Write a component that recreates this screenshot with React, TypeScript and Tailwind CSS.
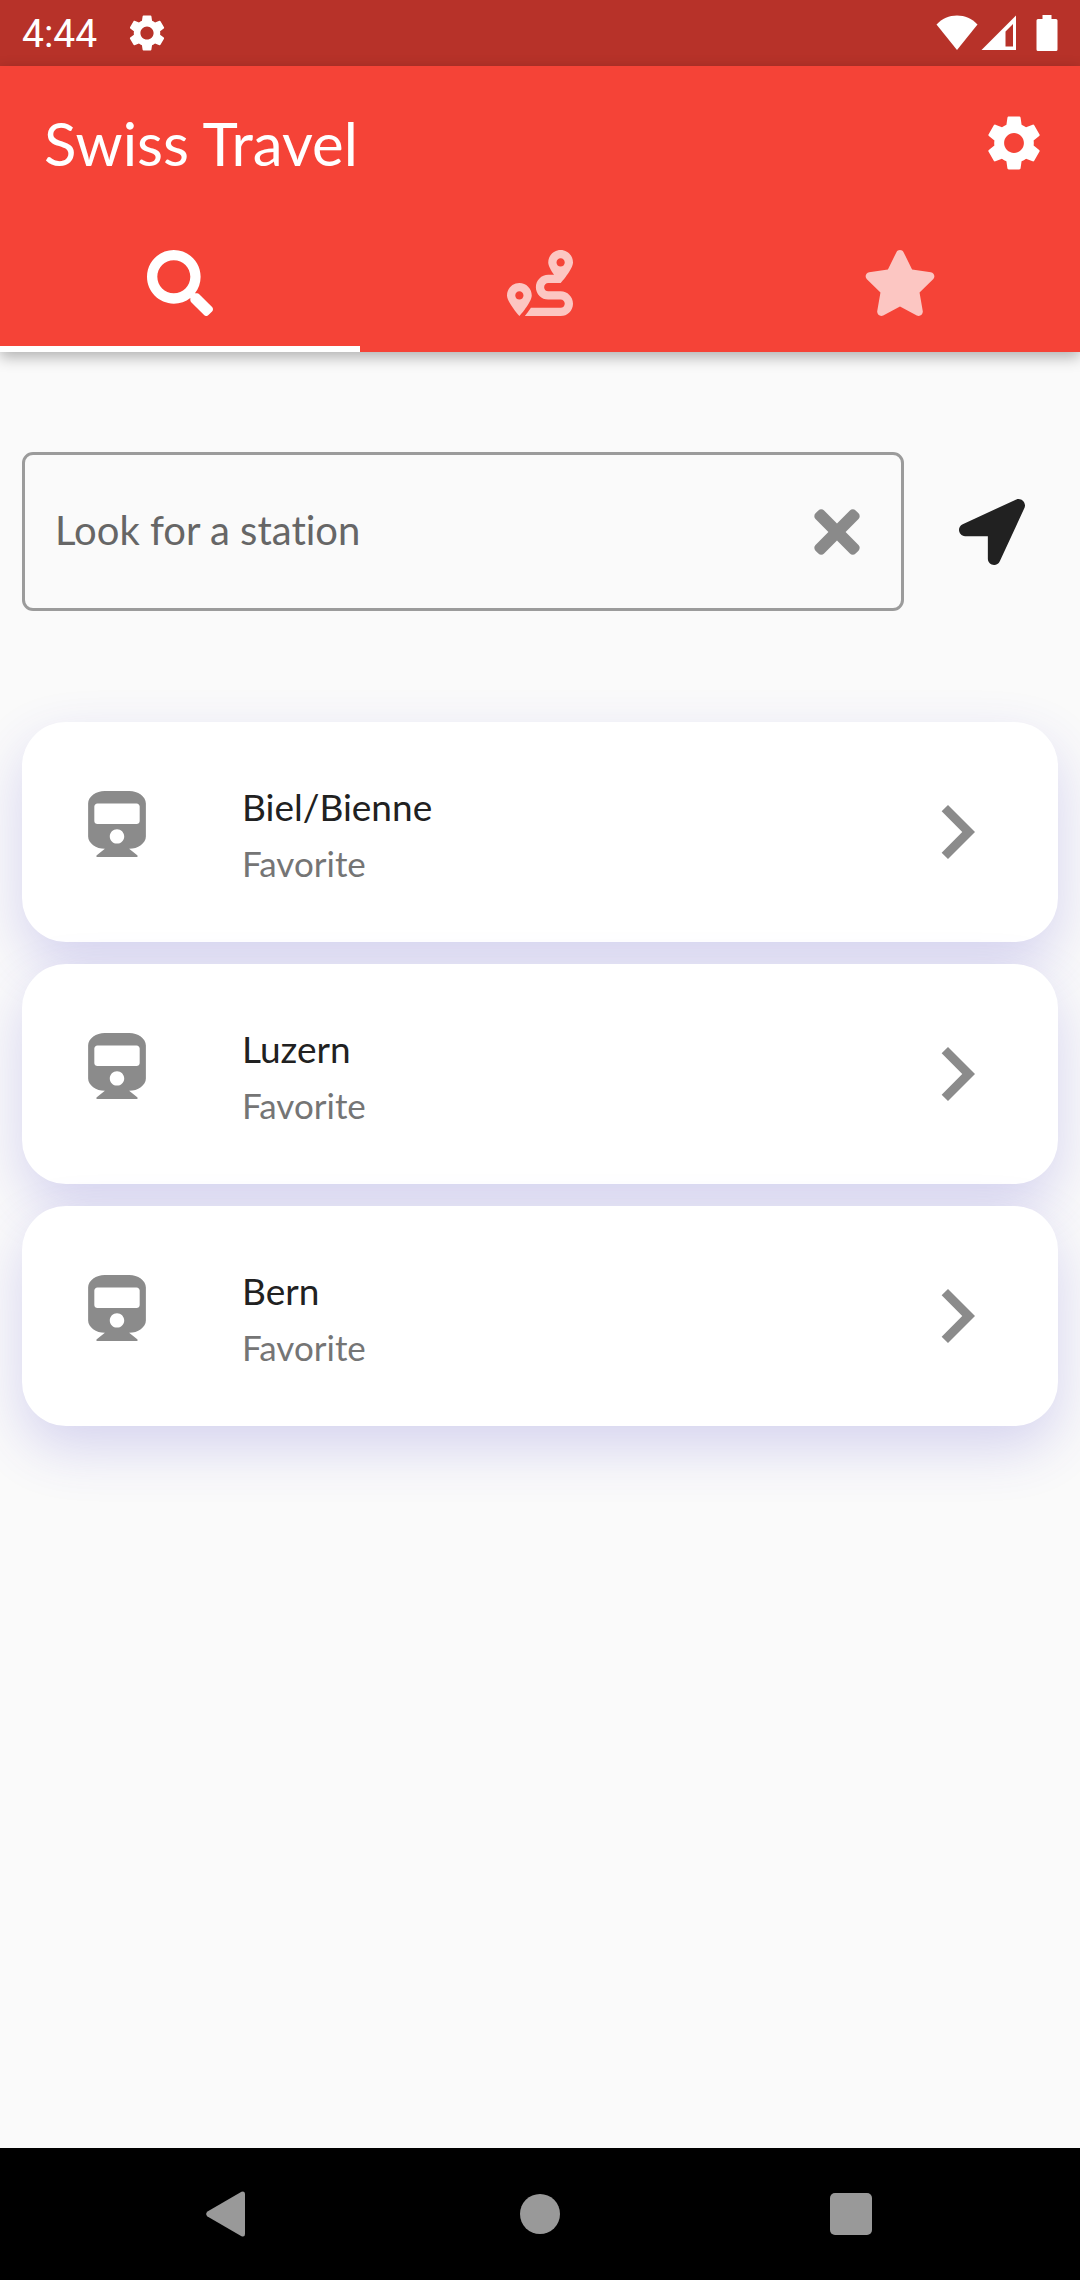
import { useState } from "react";
import { FaLocationArrow, FaRoute, FaSearch, FaStar, FaTimes, FaTrain } from "react-icons/fa";
import { MdChevronRight, MdSettings } from "react-icons/md";

const stations = ["Biel/Bienne", "Luzern", "Bern"];

const tabs = [
  { label: "Search", icon: <FaSearch className="size-[66px]" /> },
  { label: "Routes", icon: <FaRoute className="size-[66px]" /> },
  { label: "Favorites", icon: <FaStar className="h-[66px] w-[74px]" /> },
];

function StatusBar() {
  return (
    <div className="flex h-[66px] items-center bg-[#b73229] px-[22px] text-white">
      <span className="pt-[2px] font-[Roboto,sans-serif] text-[39px] leading-none">4:44</span>
      <MdSettings className="ml-[28px] size-[44px]" />
      <div className="ml-auto flex items-center">
        <svg className="h-[36px] w-[42px]" viewBox="0 0 42 36" fill="currentColor" aria-hidden="true">
          <path d="M21 35 0.5 9.5C6 3.6 13.2 0.5 21 0.5S36 3.6 41.5 9.5Z" />
        </svg>
        <svg className="ml-[3px] h-[36px] w-[36px]" viewBox="0 0 36 36" fill="currentColor" aria-hidden="true">
          <path fillRule="evenodd" d="M35 0.5V35H0.5ZM32 9 24.5 16.500V31.500H32Z" />
        </svg>
        <svg className="ml-[19px] h-[36px] w-[22px]" viewBox="0 0 22 36" fill="currentColor" aria-hidden="true">
          <path d="M6.500 0H15.500V4H20A1.500 1.500 0 0 1 21.500 5.500V34.500A1.500 1.500 0 0 1 20 36H2A1.500 1.500 0 0 1 0.500 34.500V5.500A1.500 1.500 0 0 1 2 4H6.500Z" />
        </svg>
      </div>
    </div>
  );
}

function Header() {
  const [active, setActive] = useState(0);
  return (
    <header className="z-10 bg-[#f54337] text-white shadow-[0_5px_14px_rgba(0,0,0,0.3)]">
      <div className="flex h-[154px] items-center justify-between pr-[33px] pl-[44px]">
        <h1 className="text-[60px] leading-none">Swiss Travel</h1>
        <button type="button" aria-label="Settings">
          <MdSettings className="size-[66px]" />
        </button>
      </div>
      <div className="grid h-[132px] grid-cols-3" role="tablist">
        {tabs.map((tab, i) => (
          <button
            key={tab.label}
            type="button"
            role="tab"
            aria-label={tab.label}
            aria-selected={i === active}
            onClick={() => setActive(i)}
            className={
              i === active
                ? "flex items-center justify-center border-b-6 border-white"
                : "flex items-center justify-center border-b-6 border-transparent text-[#fcc6c2]"
            }
          >
            {tab.icon}
          </button>
        ))}
      </div>
    </header>
  );
}

function SearchRow() {
  const [query, setQuery] = useState("");
  return (
    <div className="flex items-center">
      <div className="flex h-[159px] flex-1 items-center rounded-[11px] border-3 border-[#9b9b9b] pr-[41px] pl-[30px]">
        <input
          type="text"
          aria-label="Look for a station"
          placeholder="Look for a station"
          value={query}
          onChange={(e) => setQuery(e.target.value)}
          className="min-w-0 flex-1 bg-transparent pb-[4px] text-[40px] text-[#212121] outline-none placeholder:text-[#666666]"
        />
        <button type="button" aria-label="Clear" onClick={() => setQuery("")} className="text-[#8a8a8a]">
          <FaTimes className="h-[66px] w-[46px]" />
        </button>
      </div>
      <button type="button" aria-label="Use my location" className="mr-[33px] ml-[55px] text-[#212121]">
        <FaLocationArrow className="size-[66px]" />
      </button>
    </div>
  );
}

function StationCard({ name }: { name: string }) {
  return (
    <li>
      <button
        type="button"
        className="flex h-[220px] w-full items-center rounded-[44px] bg-white pr-[47px] pl-[66px] text-left shadow-[0_22px_55px_rgba(70,60,200,0.2)]"
      >
        <FaTrain className="mb-[16px] h-[66px] w-[58px] text-[#8b8b8b]" />
        <span className="ml-[96px] flex flex-1 flex-col pt-[6px]">
          <span className="text-[37px] leading-[56px] text-[#212121]">{name}</span>
          <span className="text-[35px] leading-[56px] text-[#757575]">Favorite</span>
        </span>
        <MdChevronRight className="size-[108px] text-[#8b8b8b]" />
      </button>
    </li>
  );
}

function NavigationBar() {
  return (
    <nav className="flex h-[132px] items-center justify-between bg-black px-[184px] text-[#999999]">
      <button type="button" aria-label="Back" className="flex w-[90px] justify-center">
        <svg className="h-[46px] w-[46px]" viewBox="0 0 46 46" fill="currentColor" aria-hidden="true">
          <path d="M35.500 0.700Q39 -0.500 39 3V43Q39 46.500 35.500 45.300L1.500 25.500Q-1.200 23 1.500 20.500Z" />
        </svg>
      </button>
      <button type="button" aria-label="Home" className="flex w-[90px] justify-center">
        <span className="size-[40px] rounded-full bg-current" />
      </button>
      <button type="button" aria-label="Recent apps" className="flex w-[90px] justify-center">
        <span className="size-[42px] rounded-[5px] bg-current" />
      </button>
    </nav>
  );
}

export default function App() {
  return (
    <div className="flex min-h-screen flex-col bg-[#fafafa] font-[Lato,sans-serif] [font-variant-ligatures:none]">
      <StatusBar />
      <Header />
      <main className="flex-1 overflow-hidden px-[22px] pt-[100px]">
        <SearchRow />
        <ul className="mt-[111px] flex flex-col gap-[22px]">
          {stations.map((name) => (
            <StationCard key={name} name={name} />
          ))}
        </ul>
      </main>
      <NavigationBar />
    </div>
  );
}
